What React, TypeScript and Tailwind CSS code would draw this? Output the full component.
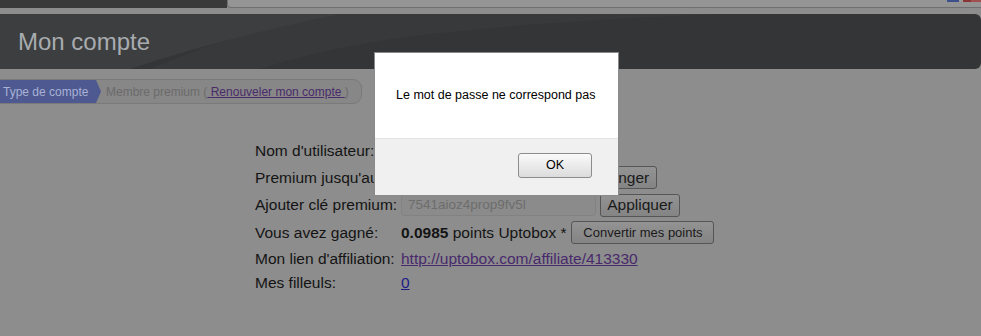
const Btn = ({ children, className = "" }: { children: React.ReactNode; className?: string }) => (
  <button
    className={
      "flex h-[23px] items-center justify-center rounded-[3px] border border-[#555] bg-[linear-gradient(#939393,#848484)] px-[10px] text-[13px] text-[#1a1a1a] " +
      className
    }
  >
    {children}
  </button>
);

const rows = [
  { label: "Nom d'utilisateur:", h: "h-[26px]" },
  { label: "Premium jusqu'au:", h: "h-[27px]" },
  { label: "Ajouter clé premium:", h: "h-[28px]" },
  { label: "Vous avez gagné:", h: "h-[27px]" },
  { label: "Mon lien d'affiliation:", h: "h-[25px]" },
  { label: "Mes filleuls:", h: "h-[24px]" },
];

function RowValue({ i }: { i: number }) {
  if (i === 0) return <span>membre413330</span>;
  if (i === 1)
    return (
      <div className="flex items-center gap-[4px]">
        <span className="w-[177px]">12/08/2013</span>
        <Btn className="w-[75px] text-[15.5px]">Changer</Btn>
      </div>
    );
  if (i === 2)
    return (
      <div className="flex items-center gap-[4px]">
        <div className="flex h-[22px] w-[195px] items-center rounded-[4px] border border-[#828282] bg-[#8b8b8b] px-[6px] text-[13.5px] text-[#6d6d6d]">
          7541aioz4prop9fv5l
        </div>
        <Btn className="w-[80px] text-[15.5px]">Appliquer</Btn>
      </div>
    );
  if (i === 3)
    return (
      <div className="flex items-center gap-[5px]">
        <span>
          <b>0.0985</b> points Uptobox *
        </span>
        <Btn className="w-[143px]">Convertir mes points</Btn>
      </div>
    );
  if (i === 4)
    return (
      <a href="#" className="text-[#48296c] underline">
        http://uptobox.com/affiliate/413330
      </a>
    );
  return (
    <a href="#" className="text-[#1c1c86] underline">
      0
    </a>
  );
}

export default function App() {
  return (
    <div className="relative h-[336px] w-[981px] overflow-hidden bg-[#8d8d8d] font-['Liberation_Sans',Arial,sans-serif]">
      {/* top strip */}
      <div className="flex h-[8px]">
        <div className="w-[227px] bg-[#3a3a3a]" />
        <div className="flex flex-1 justify-end rounded-bl-[4px] border-b border-l border-[#6f6f6f] bg-[#959595]">
          <div className="flex h-[2px]">
            <span className="w-[12px] bg-[#3d4f8a]" />
            <span className="w-[4px] bg-[#9a9a9a]" />
            <span className="w-[8px] bg-[#8a3434]" />
            <span className="w-[10px] bg-[#a05050]" />
          </div>
        </div>
      </div>

      {/* header */}
      <div className="relative mt-[6px] flex h-[55px] items-center overflow-hidden rounded-r-[6px] bg-[#343536]">
        <svg className="absolute inset-0" width="981" height="55" viewBox="0 0 981 55">
          <path d="M330 0 L720 0 Q 560 6 430 20 Q 330 32 260 55 L150 55 Q 230 20 330 0 Z" fill="#38393a" />
          <path d="M0 0 L340 0 Q 220 25 130 55 L0 55 Z" fill="#3d3e3f" />
        </svg>
        <h1 className="relative pl-[18px] text-[24px] text-[#a8acb0]">Mon compte</h1>
      </div>

      {/* breadcrumb */}
      <div className="mt-[10px] flex h-[25px] w-[362px] items-center rounded-r-[9px] border border-l-0 border-[#7a7a7a] bg-[#878787] text-[12px]">
        <div className="flex h-[23px] w-[101px] items-center bg-[#4d5990] pl-[3px] text-[#a9b1d6] [clip-path:polygon(0_0,96px_0,101px_50%,96px_100%,0_100%)]">
          Type de compte
        </div>
        <span className="ml-[5px] text-[#6b6b6b]">
          Membre premium (
          <a href="#" className="text-[#4a2a6a] underline">
            {" "}Renouveler mon compte{" "}
          </a>
          )
        </span>
      </div>

      {/* form */}
      <div className="ml-[255px] mt-[34px] flex flex-col text-[15.5px] text-[#141414]">
        {rows.map((r, i) => (
          <div key={i} className={"flex items-center " + r.h}>
            <span className="w-[146px] shrink-0">{r.label}</span>
            <RowValue i={i} />
          </div>
        ))}
      </div>

      {/* alert dialog */}
      <div className="absolute left-[374px] top-[52px] flex h-[144px] w-[245px] flex-col border border-[#8a8a8a] bg-white">
        <div className="flex h-[85px] items-center pl-[21px] text-[12.5px] text-black">
          Le mot de passe ne correspond pas
        </div>
        <div className="flex flex-1 justify-end border-t border-[#e4e4e4] bg-[#f0f0f0] pr-[26px] pt-[14px]">
          <button className="h-[25px] w-[74px] rounded-[3px] border border-[#8c8c8c] bg-[linear-gradient(#fafafa,#dcdcdc)] text-[12.5px] text-black">
            OK
          </button>
        </div>
      </div>
    </div>
  );
}
